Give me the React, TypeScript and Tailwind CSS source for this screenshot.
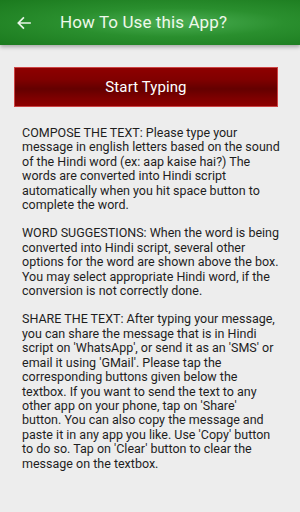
const App = () => {
  return (
    <div className="w-[300px] h-[512px] bg-[#ededed] overflow-hidden font-['Roboto',sans-serif]">
      {/* Toolbar */}
      <header className="relative h-[45px] flex items-center bg-[radial-gradient(ellipse_at_58%_50%,#4aae52_0%,#2a8f2e_45%,#1b7a1e_100%)] shadow-[0_2px_4px_rgba(0,0,0,0.3)]">
        <svg className="ml-[16px] w-[16px] h-[16px]" viewBox="0 0 24 24" fill="none" stroke="#e8f5e8" strokeWidth="2.6" strokeLinecap="square">
          <path d="M21 12H4M11 4.5 3.5 12 11 19.5" />
        </svg>
        <h1 className="ml-[28px] text-[17px] text-[#eef8ea] tracking-[0.1px]">How To Use this App?</h1>
      </header>

      <main className="px-[14px] pt-[22px]">
        <button className="w-[264px] h-[40px] border border-[#c44] bg-[linear-gradient(to_bottom,#8e0000_0%,#800000_30%,#640000_55%,#7e0000_80%,#8e0000_100%)] text-white text-[15px] tracking-[0.1px]">
          Start Typing
        </button>

        <div className="mt-[19px] pl-[8px] pr-[5px] flex flex-col gap-[14px] text-[12.5px] leading-[14.4px] text-[#1e1e1e]">
          <p>
            COMPOSE THE TEXT: Please type your message in english letters based on the sound of the Hindi word (ex: aap
            kaise hai?) The words are converted into Hindi script automatically when you hit space button to complete the
            word.
          </p>
          <p>
            WORD SUGGESTIONS: When the word is being converted into Hindi script, several other options for the word are
            shown above the box. You may select appropriate Hindi word, if the conversion is not correctly done.
          </p>
          <p>
            SHARE THE TEXT: After typing your message, you can share the message that is in Hindi script on 'WhatsApp', or
            send it as an 'SMS' or email it using 'GMail'. Please tap the corresponding buttons given below the textbox. If
            you want to send the text to any other app on your phone, tap on 'Share'
            <br />
            button. You can also copy the message and paste it in any app you like. Use 'Copy' button to do so. Tap on
            'Clear' button to clear the message on the textbox.
          </p>
        </div>
      </main>
    </div>
  );
};

export default App;
